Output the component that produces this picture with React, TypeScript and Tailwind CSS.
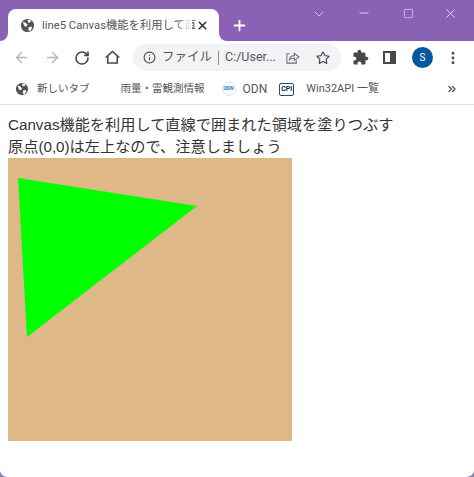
import { ArrowLeft, ArrowRight, RotateCw, Info, Star, X, Plus, Minus, Square, ChevronDown, ChevronsRight, MoreVertical } from 'lucide-react';

const UI_FONT = "font-['Roboto','Noto_Sans_CJK_JP',sans-serif]";

// Chrome's default globe favicon
const Globe = ({ className }: { className: string }) => (
  <svg viewBox="0 0 16 16" className={className}>
    <circle cx="8" cy="8" r="7" fill="#50535a" />
    <path d="M3 4l3 1 2 2-1 2-2 0-1-2zM9 10l3-1 1 1-2 4-2-1zM8 2l3 0 1 2-3 1z" fill="#fff" />
  </svg>
);

export default function App() {
  return (
    <div className={`relative flex h-[477px] w-[474px] flex-col overflow-hidden bg-white ${UI_FONT}`}>
      {/* Tab strip */}
      <div className="flex h-[41px] items-end bg-[#8a62b5] pl-2">
        <div className="relative flex h-[32px] w-[211px] items-center rounded-t-[8px] bg-white pl-[12px] pr-[10px]">
          {/* curved feet of the active tab */}
          <div className="absolute bottom-0 left-[-8px] h-[8px] w-[8px] bg-white">
            <div className="h-full w-full rounded-br-[8px] bg-[#8a62b5]" />
          </div>
          <div className="absolute bottom-0 right-[-8px] h-[8px] w-[8px] bg-white">
            <div className="h-full w-full rounded-bl-[8px] bg-[#8a62b5]" />
          </div>
          <Globe className="h-[15px] w-[15px] shrink-0" />
          <div className="relative ml-[7px] w-[154px]">
            <span className="block translate-y-[1px] whitespace-nowrap text-[11.3px] leading-[14px] text-[#55565a]">
              line5 Canvas機能を利用して直
            </span>
            <div className="absolute inset-y-0 right-[4px] w-[16px] bg-gradient-to-r from-transparent to-white" />
          </div>
          <X className="h-[13px] w-[13px] shrink-0 text-[#333]" strokeWidth={3} />
        </div>
        <div className="ml-[12px] flex h-[32px] items-center">
          <Plus className="h-[17px] w-[17px] text-white" strokeWidth={2.5} />
        </div>
        <div className="ml-auto flex h-full items-start pr-[16px] pt-[6px] text-[#e6dcf2]">
          <ChevronDown className="h-[16px] w-[16px]" strokeWidth={1.2} />
          <Minus className="ml-[30px] h-[14px] w-[14px]" strokeWidth={1.5} />
          <Square className="ml-[32px] h-[11px] w-[11px] translate-y-[2px]" strokeWidth={1.5} />
          <X className="ml-[29px] h-[15px] w-[15px]" strokeWidth={1.5} />
        </div>
      </div>

      {/* Address toolbar */}
      <div className="flex h-[33px] items-center pl-[13px] pr-[10px]">
        <ArrowLeft className="h-[17px] w-[17px] text-[#b4b4b6]" strokeWidth={2} />
        <ArrowRight className="ml-[14px] h-[17px] w-[17px] text-[#b4b4b6]" strokeWidth={2} />
        <RotateCw className="ml-[13px] h-[16px] w-[16px] text-[#47484b]" strokeWidth={2.4} />
        <svg viewBox="0 0 24 24" className="ml-[13px] h-[19px] w-[19px]">
          <path fillRule="evenodd" d="M12 3L2 12h3v8h14v-8h3L12 3zM12 5.7l5 4.5V18H7v-7.8z" fill="#47484b" />
        </svg>
        <div className="ml-[11px] flex h-[27px] w-[208px] items-center rounded-full bg-[#f1f3f4] pl-[10px] text-[12.5px] text-[#55565a]">
          <Info className="h-[13px] w-[13px] text-[#47484b]" strokeWidth={2} />
          <span className="ml-[6px] whitespace-nowrap">ファイル</span>
          <span className="mx-[6px] h-[14px] w-px bg-[#8a8a8c]" />
          <span className="whitespace-nowrap">C:/User...</span>
          <svg viewBox="0 0 16 16" className="ml-[9px] h-[15px] w-[15px]" fill="none" stroke="#6b6c70" strokeWidth="1.1">
            <path d="M5 4H2v10h10v-3" />
            <path d="M4.5 11C5 7.5 7.5 6 10 6V3.5L15 7.5 10 11V8.5C8 8.5 6 9 4.5 11z" />
          </svg>
          <Star className="ml-[16px] h-[14px] w-[14px] text-[#47484b]" strokeWidth={2} />
        </div>
        <svg viewBox="0 0 24 24" className="ml-[11px] h-[17px] w-[17px]">
          <path fill="#47484b" d="M20.5 11H19V7c0-1.1-.9-2-2-2h-4V3.5C13 2.12 11.88 1 10.5 1S8 2.12 8 3.5V5H4c-1.1 0-1.99.9-1.99 2v3.8H3.5c1.49 0 2.7 1.21 2.7 2.7s-1.21 2.7-2.7 2.7H2V20c0 1.1.9 2 2 2h3.8v-1.5c0-1.49 1.21-2.7 2.7-2.7 1.49 0 2.7 1.21 2.7 2.7V22H17c1.1 0 2-.9 2-2v-4h1.5c1.38 0 2.5-1.12 2.5-2.5S21.88 11 20.5 11z" />
        </svg>
        <div className="ml-[14px] flex h-[13px] w-[13px] border-2 border-[#47484b]">
          <div className="ml-auto h-full w-[4px] bg-[#47484b]" />
        </div>
        <div className="ml-[16px] flex h-[21px] w-[21px] items-center justify-center rounded-full bg-[#06589c] text-[10px] text-white">
          S
        </div>
        <MoreVertical className="ml-[12px] h-[16px] w-[16px] text-[#47484b]" strokeWidth={2.4} />
      </div>

      {/* Bookmarks bar */}
      <div className="flex h-[31px] items-center border-b border-[#dedede] pl-[15px] pr-[16px] text-[10.5px] text-[#55565a]">
        <Globe className="h-[14px] w-[14px]" />
        <span className="ml-[8px] whitespace-nowrap">新しいタブ</span>
        <span className="ml-[31px] whitespace-nowrap">雨量・雷観測情報</span>
        <span className="ml-[17px] flex h-[14px] w-[14px] items-center justify-center rounded-full border border-[#cfe3f2] text-[5px] font-bold text-[#2a7ab8]">
          ODN
        </span>
        <span className="ml-[7px] text-[12px]">ODN</span>
        <span className="ml-[12px] flex h-[13px] w-[15px] items-center justify-center rounded-[2px] border border-[#1f4e6e] text-[7px] font-bold text-[#222]">
          CPI
        </span>
        <span className="ml-[12px] whitespace-nowrap text-[11px]">Win32API 一覧</span>
        <ChevronsRight className="ml-auto h-[12px] w-[12px] text-[#47484b]" strokeWidth={2.4} />
      </div>

      {/* Page content */}
      <div className="pl-[8px] pt-[9px] font-['Liberation_Sans','Noto_Sans_CJK_JP',sans-serif] text-[15.2px] leading-[22px] text-[#333]">
        <p className="whitespace-nowrap">Canvas機能を利用して直線で囲まれた領域を塗りつぶす</p>
        <p className="whitespace-nowrap">原点(0,0)は左上なので、注意しましょう</p>
        <div className="h-[283px] w-[284px] bg-[#deb887]">
          <svg viewBox="0 0 284 283" className="h-full w-full">
            <polygon points="10,20 189,48 19,179" fill="#00ff00" />
          </svg>
        </div>
      </div>

      {/* Window corners */}
      <svg viewBox="0 0 7 7" className="absolute bottom-0 left-0 h-[7px] w-[7px]">
        <path d="M0 1Q1 6 7 7L0 7z" fill="#8f7fb0" />
      </svg>
      <svg viewBox="0 0 7 7" className="absolute bottom-0 right-0 h-[7px] w-[7px]">
        <path d="M7 1Q6 6 0 7L7 7z" fill="#8f7fb0" />
      </svg>
    </div>
  );
}
